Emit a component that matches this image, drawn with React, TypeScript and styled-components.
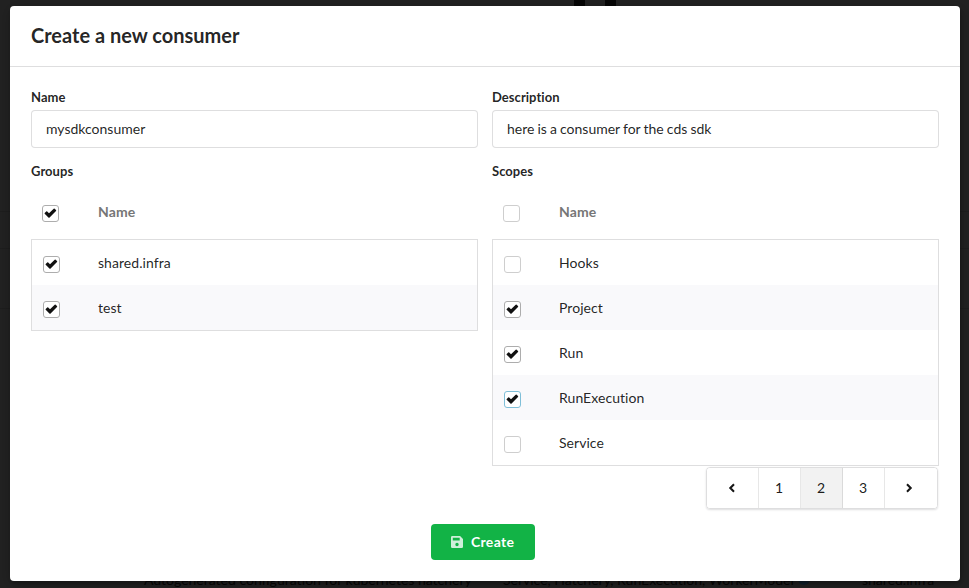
import React, { useState } from 'react';
import styled, { createGlobalStyle, css } from 'styled-components';

const GlobalStyle = createGlobalStyle`
  *, *::before, *::after { box-sizing: border-box; }
  body {
    margin: 0;
    overflow: hidden;
    background: #222;
    color: rgba(0, 0, 0, 0.87);
    font-family: Lato, 'Liberation Sans', sans-serif;
    font-size: 14px;
    line-height: 18px;
  }
`;

const Page = styled.div`
  position: relative;
  height: 588px;
  padding: 6px 9px 0 10px;
  background: #222;
`;

const Backdrop = styled.div`
  position: absolute;
  inset: 0;
  overflow: hidden;
  color: #070707;
`;

const Mark = styled.span<{ $x: number }>`
  position: absolute;
  left: ${p => p.$x}px;
  top: 0;
  width: 11px;
  height: 20px;
  background: #050505;
`;

const Rule = styled.span<{ $y: number }>`
  position: absolute;
  left: 0;
  right: 0;
  top: ${p => p.$y}px;
  height: 1px;
  background: #1e1e1e;
`;

const BackdropText = styled.span<{ $x: number; $width: number }>`
  position: absolute;
  left: ${p => p.$x}px;
  width: ${p => p.$width}px;
  top: 571px;
  white-space: nowrap;
`;

const InfoDot = styled.span`
  position: absolute;
  left: 798px;
  top: 573px;
  width: 12px;
  height: 12px;
  border-radius: 50%;
  background: #10202c;
`;

const Modal = styled.section`
  position: relative;
  height: 575px;
  border-radius: 4px;
  background: #fff;
  box-shadow: 1px 3px 3px 0 rgba(0, 0, 0, 0.2), 1px 3px 15px 2px rgba(0, 0, 0, 0.2);
`;

const Header = styled.h1`
  height: 61px;
  margin: 0;
  padding: 16px 21px;
  border-bottom: 1px solid rgba(34, 36, 38, 0.15);
  font-size: 20px;
  font-weight: 700;
  line-height: 26px;
`;

const Columns = styled.div`
  display: grid;
  grid-template-columns: 447px 447px;
  column-gap: 14px;
  height: 443px;
  padding: 21px 21px 0;
`;

const Column = styled.div`
  display: flex;
  flex-direction: column;
`;

const Label = styled.label`
  height: 22px;
  font-size: 13px;
  font-weight: 700;
  letter-spacing: 0.04px;
  line-height: 19px;
`;

const Input = styled.input`
  height: 38px;
  margin: 0 0 14px;
  padding: 0 14px 2px;
  border: 1px solid rgba(34, 36, 38, 0.15);
  border-radius: 4px;
  outline: 0;
  color: rgba(0, 0, 0, 0.87);
  font: 14px Lato, 'Liberation Sans', sans-serif;
  word-spacing: -0.5px;
`;

const rowLayout = css`
  display: flex;
  align-items: center;
`;

const TableHead = styled.div`
  ${rowLayout}
  height: 55px;
  padding-left: 11px;
  color: #767676;
  font-weight: 700;
`;

const TableBody = styled.div`
  border: 1px solid rgba(34, 36, 38, 0.15);
`;

const Row = styled.div`
  ${rowLayout}
  height: 45px;
  padding-left: 11px;

  &:nth-child(even) { background: #f9f9fb; }
`;

const HeadName = styled.span`
  margin: 1px 0 0 39px;
  letter-spacing: 0.1px;
`;

const RowName = styled.span`
  margin: 1px 0 0 38px;
  letter-spacing: 0.05px;
`;

const Box = styled.button<{ $checked: boolean; $focus: boolean }>`
  display: block;
  width: 17px;
  height: 17px;
  margin: 3px 0 0;
  padding: 0;
  border: 1px solid ${p => (p.$focus ? '#7fbfd8' : p.$checked ? '#adadad' : '#cecece')};
  border-radius: 3px;
  background: #fff;
  color: #111;

  svg { display: block; width: 15px; height: 15px; }
`;

const Pagination = styled.nav`
  display: flex;
  align-self: flex-end;
  height: 42px;
  margin: 1px 1px 0 0;
  border: 1px solid rgba(34, 36, 38, 0.15);
  border-radius: 4px;
  box-shadow: 0 1px 2px 0 rgba(34, 36, 38, 0.15);
  overflow: hidden;
`;

const PageItem = styled.button<{ $active?: boolean; $wide?: boolean }>`
  display: flex;
  align-items: center;
  justify-content: center;
  width: ${p => (p.$wide ? 52 : 42)}px;
  padding: 0 1px 1px 0;
  border: 0;
  border-right: 1px solid ${p => (p.$active ? '#dadada' : '#e7e7e7')};
  background: ${p => (p.$active ? '#f2f2f2' : '#fff')};
  color: rgba(0, 0, 0, 0.9);
  font: 14px Lato, 'Liberation Sans', sans-serif;

  &:last-child { border-right: 0; }
  &:last-child svg { margin-right: 3px; }
`;

const Actions = styled.footer`
  display: flex;
  padding: 14px 0 0 421px;
`;

const CreateButton = styled.button`
  display: flex;
  align-items: center;
  width: 104px;
  height: 36px;
  padding: 0 0 0 20px;
  border: 0;
  border-radius: 4px;
  background: #12b346;
  color: #fff;
  font: 700 14px/18px Lato, 'Liberation Sans', sans-serif;
  letter-spacing: 0.3px;

  svg { margin-right: 8px; opacity: 0.8; }
`;

function Checkbox({ initial, focus = false, label }: { initial: boolean; focus?: boolean; label: string }) {
  const [checked, setChecked] = useState(initial);
  return (
    <Box type="button" role="checkbox" aria-checked={checked} aria-label={label}
      $checked={checked} $focus={focus} onClick={() => setChecked(!checked)}>
      {checked && (
        <svg viewBox="0 0 15 15">
          <path d="M1.7 7 3.2 5.5Q3.7 5 4.2 5.5L6 7.3 10.7 2.7Q11.2 2.3 11.7 2.7L13 4.1Q13.4 4.6 13 5L6.6 11.4Q6 11.9 5.4 11.4L1.7 7.8Q1.3 7.4 1.7 7Z" fill="currentColor" />
        </svg>
      )}
    </Box>
  );
}

type Entry = { name: string; checked: boolean; focus?: boolean };

function SelectTable({ allChecked, entries }: { allChecked: boolean; entries: Entry[] }) {
  return (
    <>
      <TableHead>
        <Checkbox initial={allChecked} label="Select all" />
        <HeadName>Name</HeadName>
      </TableHead>
      <TableBody>
        {entries.map(e => (
          <Row key={e.name}>
            <Checkbox initial={e.checked} focus={e.focus} label={e.name} />
            <RowName>{e.name}</RowName>
          </Row>
        ))}
      </TableBody>
    </>
  );
}

function Chevron({ right = false }: { right?: boolean }) {
  return (
    <svg width="8" height="10" viewBox="0 0 8 10" fill="none" stroke="currentColor" strokeWidth="2.1">
      <path d={right ? 'M2 1.3 5.7 5 2 8.7' : 'M6 1.3 2.3 5 6 8.7'} />
    </svg>
  );
}

const groups: Entry[] = [
  { name: 'shared.infra', checked: true },
  { name: 'test', checked: true },
];

const scopes: Entry[] = [
  { name: 'Hooks', checked: false },
  { name: 'Project', checked: true },
  { name: 'Run', checked: true },
  { name: 'RunExecution', checked: true, focus: true },
  { name: 'Service', checked: false },
];

export default function App() {
  return (
    <Page>
      <GlobalStyle />
      <Backdrop aria-hidden="true">
        <Mark $x={574} />
        <Mark $x={605} />
        <Rule $y={211} />
        <Rule $y={248} />
        <Rule $y={308} />
        <BackdropText $x={144} $width={340}>Autogenerated configuration for kubernetes hatchery</BackdropText>
        <BackdropText $x={503} $width={292}>Service, Hatchery, RunExecution, WorkerModel</BackdropText>
        <InfoDot />
        <BackdropText $x={862} $width={90}>shared.infra</BackdropText>
      </Backdrop>
      <Modal role="dialog">
        <Header>Create a new consumer</Header>
        <Columns>
          <Column>
            <Label htmlFor="name">Name</Label>
            <Input id="name" defaultValue="mysdkconsumer" />
            <Label>Groups</Label>
            <SelectTable allChecked entries={groups} />
          </Column>
          <Column>
            <Label htmlFor="description">Description</Label>
            <Input id="description" defaultValue="here is a consumer for the cds sdk" />
            <Label>Scopes</Label>
            <SelectTable allChecked={false} entries={scopes} />
            <Pagination>
              <PageItem $wide aria-label="Previous"><Chevron /></PageItem>
              <PageItem>1</PageItem>
              <PageItem $active>2</PageItem>
              <PageItem>3</PageItem>
              <PageItem $wide aria-label="Next"><Chevron right /></PageItem>
            </Pagination>
          </Column>
        </Columns>
        <Actions>
          <CreateButton type="button">
            <svg width="12" height="12" viewBox="0 0 12 12">
              <path fillRule="evenodd" fill="currentColor" d="M1.3 0H9.1L12 2.9V10.7Q12 12 10.7 12H1.3Q0 12 0 10.7V1.3Q0 0 1.3 0ZM1.8 1.8V4.5H8.7V1.8ZM6 6.8A1.7 1.7 0 1 0 6 10.2A1.7 1.7 0 1 0 6 6.8Z" />
            </svg>
            Create
          </CreateButton>
        </Actions>
      </Modal>
    </Page>
  );
}
